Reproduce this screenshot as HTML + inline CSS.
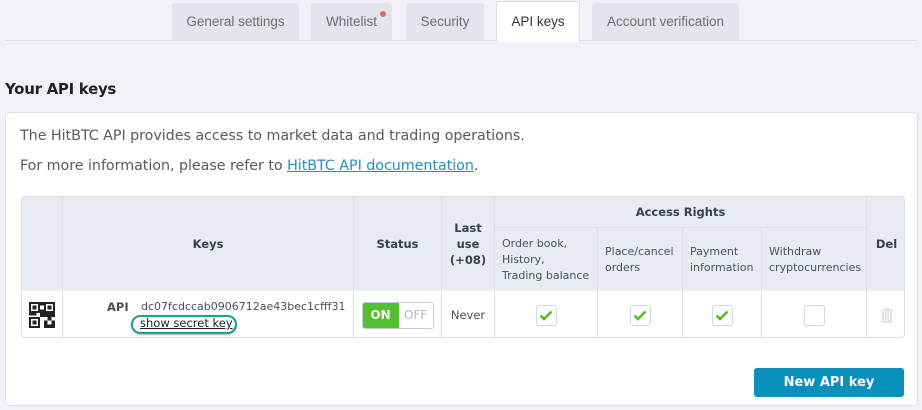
<!DOCTYPE html>
<html><head><style>
*{box-sizing:border-box;margin:0;padding:0}
body{width:922px;height:410px;background:#f1f2f7;font-family:"DejaVu Sans","Liberation Sans",sans-serif;color:#4a4e57;position:relative;overflow:hidden}
.tab{position:absolute;top:3px;height:37px;background:#e3e4ec;border-radius:3px 3px 0 0;font:13.5px "Liberation Sans",sans-serif;color:#6b6f78;text-align:center;line-height:37px}
.tab.act{top:1px;height:41px;background:#fff;color:#333;border:1px solid #dcdde5;border-bottom:none;line-height:40px}
.hl{position:absolute;top:40px;left:5px;width:912px;height:1px;background:#dcdde3}
h2{position:absolute;left:5px;top:80px;font:bold 15px "DejaVu Sans",sans-serif;color:#1e2128;letter-spacing:-0.3px}
.panel{position:absolute;left:5px;top:112px;width:913px;height:294px;background:#fff;border:1px solid #dfe0e6;border-radius:4px}
.p{position:absolute;left:15px;font-size:14.3px;color:#555a63;letter-spacing:-0.05px}
.p a{color:#1f8fc4;text-decoration:underline}
.c{position:absolute;border-right:1px solid #dcdde5;font-size:11.5px;display:flex;align-items:center;justify-content:center;text-align:center}
.h{background:#e9ebf2;font-weight:bold;color:#3c4049}
.s{background:#e9ebf2;font-weight:normal;color:#4e525b;text-align:left;justify-content:flex-start;padding-left:7px;line-height:16px;font-size:11px;white-space:nowrap}
.cb{width:21px;height:21px;border:1px solid #d5d7dd;border-radius:3px;background:#fff;display:flex;align-items:center;justify-content:center}
.btn{position:absolute;left:754px;top:368px;width:150px;height:29px;background:#0b8fbb;border-radius:3px;color:#fff;font-weight:bold;font-size:13px;text-align:center;line-height:29px}
</style></head><body>
<div class="tab" style="left:172px;width:127px">General settings</div>
<div class="tab" style="left:311px;width:81px">Whitelist<span style="position:absolute;left:69px;top:8px;width:6px;height:6px;border-radius:3px;background:#e5675c"></span></div>
<div class="tab" style="left:406px;width:78px">Security</div>
<div class="hl"></div>
<div class="tab act" style="left:496px;width:84px">API keys</div>
<div class="tab" style="left:592px;width:147px">Account verification</div>
<h2>Your API keys</h2>
<div class="panel"></div>
<div class="p" style="top:128px;left:20px">The HitBTC API provides access to market data and trading operations.</div>
<div class="p" style="top:158px;left:20px">For more information, please refer to <a>HitBTC API documentation</a>.</div>
<div style="position:absolute;left:21px;top:196px;width:884px;height:142px;border:1px solid #dcdde5;border-radius:4px;overflow:hidden;background:#fff">
<div style="position:absolute;left:0;top:0;width:884px;height:94px;background:#e9ebf2;border-bottom:1px solid #dcdde5"></div>
<div class="c h" style="left:0;top:0;width:41px;height:94px"></div>
<div class="c h" style="left:41px;top:0;width:291px;height:94px">Keys</div>
<div class="c h" style="left:332px;top:0;width:88px;height:94px">Status</div>
<div class="c h" style="left:420px;top:0;width:53px;height:94px;line-height:16px">Last<br>use<br>(+08)</div>
<div class="c h" style="left:473px;top:0;width:372px;height:31px;border-bottom:1px solid #dcdde5">Access Rights</div>
<div class="c s" style="left:473px;top:31px;width:103px;height:63px">Order book,<br>History,<br>Trading balance</div>
<div class="c s" style="left:576px;top:31px;width:85px;height:63px">Place/cancel<br>orders</div>
<div class="c s" style="left:661px;top:31px;width:79px;height:63px">Payment<br>information</div>
<div class="c s" style="left:740px;top:31px;width:105px;height:63px">Withdraw<br>cryptocurrencies</div>
<div class="c h" style="left:845px;top:0;width:39px;height:94px;border-right:none">Del</div>
<div class="c" style="left:0;top:94px;width:41px;height:48px">
<svg width="26" height="26" viewBox="0 0 7 7" shape-rendering="crispEdges"><g fill="#222"><path d="M0 0h3v3H0zM4 0h3v3H4zM0 4h3v3H0z"/></g><g fill="#fff"><path d="M.6.6h1.8v1.8H.6zM4.6.6h1.8v1.8H4.6zM.6 4.6h1.8v1.8H.6z"/></g><g fill="#222"><path d="M1 1h1v1H1zM5 1h1v1H5zM1 5h1v1H1zM3 0h1v1H3zM3 2h1v2H3zM4 3h3v1H4zM0 3h2v.6H0zM4 5h1v2H4zM5 4h1v1H5zM6 5h1v2H6zM5 6h1v1H5z"/></g></svg></div>
<div class="c" style="left:41px;top:94px;width:291px;height:48px;display:block;text-align:left">
<span style="position:absolute;left:44px;top:9px;font-weight:bold;font-size:11.5px;color:#4a4e57">API</span>
<span style="position:absolute;left:78px;top:9px;font-size:11px;color:#4a4e57">dc07fcdccab0906712ae43bec1cfff31</span>
<span style="position:absolute;left:68px;top:24px;width:106px;height:19px;border:2.5px solid #17a58a;border-radius:10px;box-shadow:0 1px 2px rgba(0,0,0,.3)"></span>
<span style="position:absolute;left:77px;top:25px;font-size:11.5px;color:#222;text-decoration:underline">show secret key</span></div>
<div class="c" style="left:332px;top:94px;width:88px;height:48px">
<div style="width:72px;height:27px;border:1px solid #c9cbd1;border-radius:3px;display:flex;overflow:hidden;font-size:12px"><div style="width:36px;background:#52c02f;color:#fff;font-weight:bold;line-height:25px">ON</div><div style="flex:1;color:#b4b6bc;line-height:25px">OFF</div></div></div>
<div class="c" style="left:420px;top:94px;width:53px;height:48px;font-size:11.5px">Never</div>
<div class="c" style="left:473px;top:94px;width:103px;height:48px"><div class="cb"><svg width="14" height="11" viewBox="0 0 14 11"><path d="M1.5 5.5l3.5 3.5 7.5-7.5" fill="none" stroke="#4cbf2c" stroke-width="2.6"/></svg></div></div>
<div class="c" style="left:576px;top:94px;width:85px;height:48px"><div class="cb"><svg width="14" height="11" viewBox="0 0 14 11"><path d="M1.5 5.5l3.5 3.5 7.5-7.5" fill="none" stroke="#4cbf2c" stroke-width="2.6"/></svg></div></div>
<div class="c" style="left:661px;top:94px;width:79px;height:48px"><div class="cb"><svg width="14" height="11" viewBox="0 0 14 11"><path d="M1.5 5.5l3.5 3.5 7.5-7.5" fill="none" stroke="#4cbf2c" stroke-width="2.6"/></svg></div></div>
<div class="c" style="left:740px;top:94px;width:105px;height:48px"><div class="cb"></div></div>
<div class="c" style="left:845px;top:94px;width:39px;height:48px;border-right:none"><svg width="12" height="15" viewBox="0 0 12 15"><path d="M4 0h4v1.5h4v2H0v-2h4zM1 4.5h10V15H1z" fill="#dfe1e6"/><path d="M3.5 6v7M6 6v7M8.5 6v7" stroke="#fff" stroke-width="1"/></svg></div>
</div>
<div class="btn">New API key</div>
</body></html>
